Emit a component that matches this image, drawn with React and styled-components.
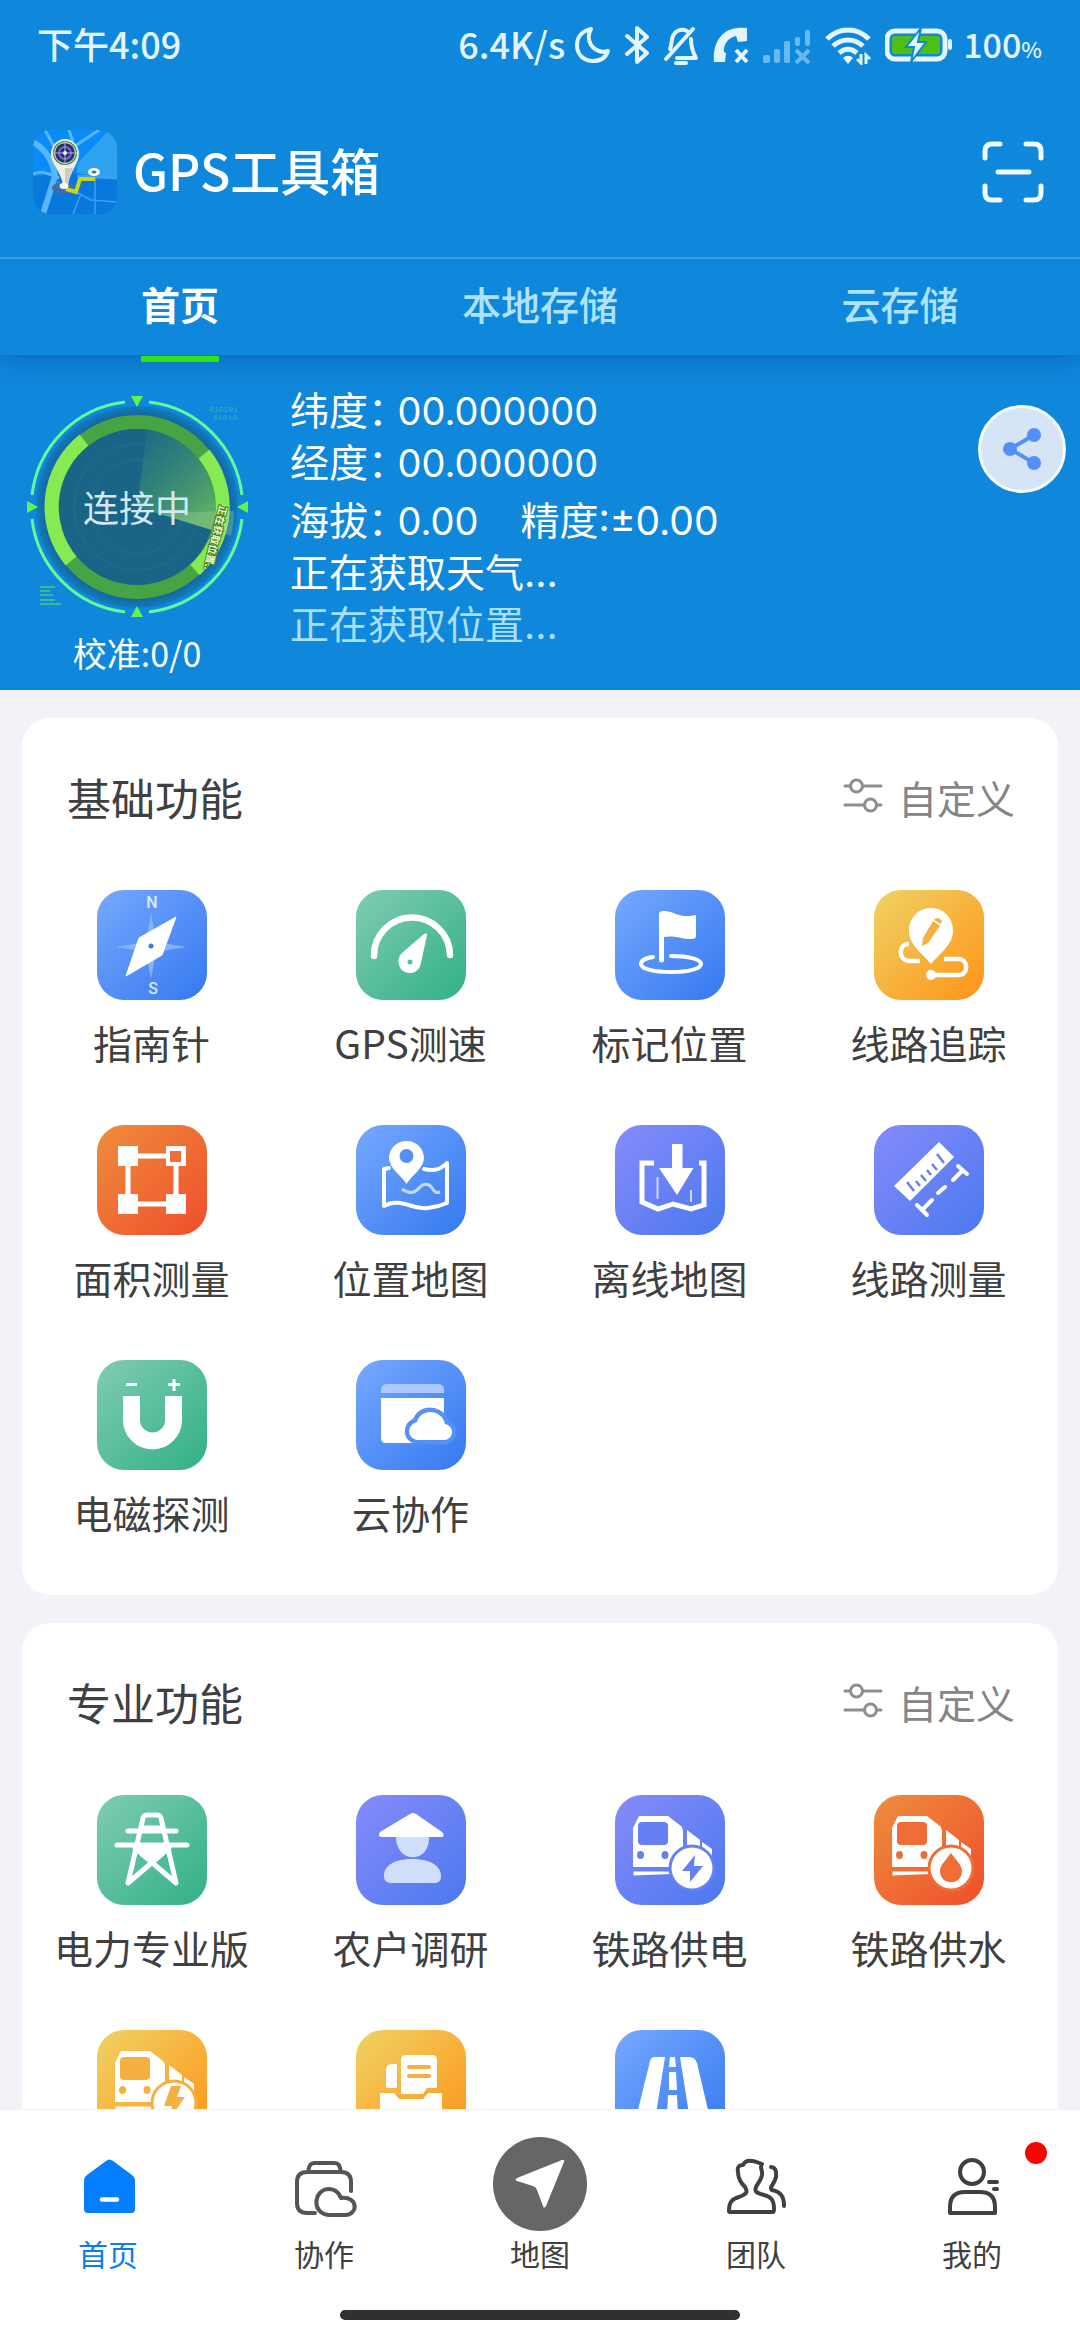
import React from "react";
import styled, { createGlobalStyle } from "styled-components";

const GlobalStyle = createGlobalStyle`
  * { box-sizing: border-box; }
  body {
    margin: 0;
    background: #f2f2f8;
    font-family: "Noto Sans CJK SC", "Noto Sans", sans-serif;
    color: #404040;
  }
  button {
    margin: 0;
    padding: 0;
    border: 0;
    background: none;
    color: inherit;
    font: inherit;
  }
  svg { display: block; }
`;

const Screen = styled.div`
  display: flex;
  flex-direction: column;
  height: 100vh;
`;

/* ---------- status bar ---------- */

const StatusBar = styled.div`
  display: flex;
  align-items: center;
  justify-content: space-between;
  height: 86px;
  padding: 0 38px 0 37px;
  background: #0f87db;
  color: #e2f5ff;
  font-size: 36px;
  font-weight: 500;
`;

const StatusGroup = styled.div`
  display: flex;
  align-items: center;
`;

const StatusIcons = styled.div`
  display: flex;
  align-items: center;
  gap: 14px;
  padding: 4px 10px 0 8px;
`;

const Percent = styled.span`
  font-size: 34px;
  small { font-size: 22px; }
`;

/* ---------- header ---------- */

const Header = styled.header`
  display: flex;
  align-items: center;
  height: 171px;
  padding: 0 36px 0 33px;
  background: #0f87db;
  color: #fff;
`;

const Title = styled.h1`
  flex: 1;
  margin: 0 0 0 16px;
  padding-bottom: 6px;
  font-size: 50px;
  font-weight: 500;
  line-height: 64px;
`;

const Tabs = styled.nav`
  position: relative;
  z-index: 1;
  display: grid;
  grid-template-columns: repeat(3, 1fr);
  height: 98px;
  border-top: 2px solid #3c9fe5;
  background: #0f87db;
  box-shadow: 0 4px 22px rgba(0, 60, 130, 0.4);
  clip-path: inset(0 0 -30px 0);
`;

const Tab = styled.button`
  position: relative;
  padding-bottom: 8px;
  color: ${(p) => (p.$active ? "#fff" : "#aee2ff")};
  font-size: 39px;
  font-weight: ${(p) => (p.$active ? 700 : 500)};

  &::after {
    content: "";
    display: ${(p) => (p.$active ? "block" : "none")};
    position: absolute;
    left: 50%;
    bottom: -7px;
    width: 78px;
    height: 6px;
    margin-left: -39px;
    background: #2fe314;
  }
`;

/* ---------- position panel ---------- */

const Panel = styled.section`
  display: flex;
  align-items: flex-start;
  padding: 40px 14px 15px 25px;
  background: #0f87db;
  color: #fff;
`;

const Gauge = styled.div`
  display: flex;
  flex-direction: column;
  align-items: center;
  gap: 12px;
`;

const GaugeDial = styled.div`
  display: grid;
  place-items: center;
  > * { grid-area: 1 / 1; }
`;

const DialText = styled.span`
  padding-bottom: 2px;
  color: #cfe8f2;
  font-size: 36px;
  line-height: 44px;
`;

const Calibration = styled.span`
  font-size: 34px;
  line-height: 44px;
`;

const Readings = styled.div`
  flex: 1;
  display: grid;
  row-gap: 6px;
  margin: -10px 0 0 41px;
  font-family: Inter, "Noto Sans CJK SC", sans-serif;
  font-size: 39px;
  line-height: 52px;
`;

const Reading = styled.div`
  display: flex;
  color: ${(p) => (p.$soft ? "#a9dfff" : "#fff")};
`;

const ReadingLabel = styled.span`
  font-feature-settings: "halt";
  margin-right: 10px;
`;

const ReadingValue = styled.span`
  margin-right: 42px;
  font-size: 38px;
`;

const ShareButton = styled.button`
  display: grid;
  place-items: center;
  width: 88px;
  height: 88px;
  margin-top: 10px;
  border: 3px solid #f4fcff;
  border-radius: 50%;
  background: #d5e5f5;
`;

/* ---------- function cards ---------- */

const Content = styled.main`
  flex: 1;
  min-height: 0;
  display: flex;
  flex-direction: column;
  gap: 28px;
  padding: 28px 22px;
  overflow-y: auto;
  scrollbar-width: none;
`;

const Card = styled.section`
  flex: none;
  padding-bottom: 55px;
  border-radius: 28px;
  background: #fff;
`;

const CardHead = styled.div`
  display: flex;
  align-items: center;
  justify-content: space-between;
  height: 172px;
  padding: 0 43px 14px 45px;
`;

const CardTitle = styled.h2`
  margin: 0;
  font-size: 44px;
  font-weight: 400;
`;

const CustomButton = styled.button`
  display: flex;
  align-items: center;
  gap: 15px;
  color: #858585;
  font-size: 39px;
`;

const Grid = styled.div`
  display: grid;
  grid-template-columns: repeat(4, 1fr);
  row-gap: 55px;
`;

const Item = styled.button`
  display: flex;
  flex-direction: column;
  align-items: center;
  gap: 15px;
  min-height: 180px;
  font-size: 39px;
  line-height: 54px;
  white-space: nowrap;
`;

const tones = {
  blue: ["#76a8ff", "#5590f8", "#3579f0"],
  green: ["#80ccb2", "#58bf9c", "#31b088"],
  orange: ["#ee8d3d", "#f06d35", "#f04e2b"],
  purple: ["#868bfa", "#667ff3", "#4b78ef"],
  yellow: ["#efd364", "#f4b040", "#ff9318"],
};

const Tile = styled.span`
  display: block;
  width: 110px;
  height: 110px;
  border-radius: 27px;
  background: linear-gradient(135deg, ${(p) => tones[p.$tone][0]}, ${(p) => tones[p.$tone][2]});
  color: ${(p) => tones[p.$tone][1]};
`;

/* ---------- bottom bar ---------- */

const BottomBar = styled.footer`
  background: #fff;
  border-top: 1px solid #f0f0f5;
  padding-bottom: 20px;
`;

const NavRow = styled.nav`
  display: grid;
  grid-template-columns: repeat(5, 1fr);
  padding: 27px 0 39px;
`;

const NavItem = styled.a`
  position: relative;
  display: flex;
  flex-direction: column;
  align-items: center;
  gap: 4px;
  color: ${(p) => (p.$active ? "#0a7df0" : "#404040")};
  font-size: 30px;
  line-height: 36px;
  text-decoration: none;
`;

const Badge = styled.i`
  position: absolute;
  top: 5px;
  right: 33px;
  width: 22px;
  height: 22px;
  border-radius: 50%;
  background: #f00;
`;

const HomeHandle = styled.div`
  width: 37%;
  height: 10px;
  margin: 0 auto;
  border-radius: 5px;
  background: #303030;
`;

/* ---------- drawings ---------- */

const StatusGlyphs = () => (
  <StatusIcons aria-hidden="true">
    <svg width="38" height="40" viewBox="0 0 38 40" fill="none" stroke="#e2f5ff" strokeWidth="4" strokeLinejoin="round">
      <path d="M18 4C9 6 4 12 4 20c0 10 7 16 16 16 8 0 13-4 15-10-3 1-6 1-9 0C17 23 13 13 18 4Z" />
    </svg>
    <svg width="24" height="40" viewBox="0 0 24 40" fill="none" stroke="#e2f5ff" strokeWidth="4" strokeLinejoin="round" strokeLinecap="round">
      <path d="M2 11l20 17-10 9V3l10 9L2 29" />
    </svg>
    <svg width="36" height="40" viewBox="0 0 36 40" fill="none" stroke="#e2f5ff" strokeWidth="4" strokeLinejoin="round" strokeLinecap="round">
      <path d="M30 4L3 34M7 24c2-4 1-9 3-13 2-5 8-8 14-5M28 14c0 8 1 12 5 19H14" />
      <path d="M13 38h10" />
    </svg>
    <svg width="36" height="40" viewBox="0 0 36 40">
      <path d="M1 37C0 27 2 18 8 11C14 4 23 2 34 3v13l-9 1-2-6c-9 2-13 10-12 16l2 1-1 9Z" fill="#e2f5ff" />
      <path d="M23 25l11 12M34 25L23 37" stroke="#e2f5ff" strokeWidth="4" />
    </svg>
    <svg width="48" height="40" viewBox="0 0 48 40" fill="#69b8ef">
      <rect x="0" y="30" width="7" height="8" rx="2" />
      <rect x="11" y="24" width="6" height="14" rx="2" />
      <rect x="21" y="16" width="6" height="22" rx="2" />
      <rect x="32" y="12" width="5" height="9" rx="2" />
      <rect x="42" y="5" width="5" height="16" rx="2" />
      <path d="M33 25l13 13M46 25L33 38" stroke="#69b8ef" strokeWidth="4" />
    </svg>
    <svg width="46" height="40" viewBox="0 0 46 40" fill="none" stroke="#e2f5ff" strokeWidth="5">
      <path d="M2 14C14 2 32 2 44 14M8 21c9-8 21-8 30 0M14 28c6-5 12-5 18 0" />
      <path d="M18 33c3-3 7-3 10 0l-5 6Z" fill="#e2f5ff" stroke="none" />
      <path d="M36 29v9l-4-4M41 39v-9l4 4" strokeWidth="3" />
    </svg>
    <svg width="68" height="40" viewBox="0 0 68 40">
      <rect x="2" y="6" width="58" height="28" rx="8" fill="none" stroke="#e2f5ff" strokeWidth="5" />
      <rect x="7" y="11" width="48" height="18" rx="3" fill="#4ebf16" />
      <rect x="63" y="14" width="4" height="11" rx="2" fill="#e2f5ff" />
      <path d="M36 3L21 22h8l-3 15 15-20h-8Z" fill="#e2f5ff" stroke="#0f87db" strokeWidth="2" />
    </svg>
  </StatusIcons>
);

const Logo = () => (
  <svg width="84" height="84" viewBox="0 0 84 84" aria-hidden="true">
    <defs>
      <clipPath id="logoClip"><rect width="84" height="84" rx="18" /></clipPath>
    </defs>
    <g clipPath="url(#logoClip)">
      <rect width="84" height="84" fill="#0a8cf8" />
      <path d="M76 0L44 34v14h40V0Z" fill="#2ea2ee" />
      <path d="M0 46l42-3 42 6v35H0Z" fill="#0878dc" />
      <path d="M0 12c12 7 20 18 22 34L10 84" fill="none" stroke="#59b6fb" strokeWidth="6" />
      <path d="M12 0l12 22M36 0l4 12M66 0L42 16M0 44c10-4 16 0 26 4" fill="none" stroke="#59b6fb" strokeWidth="3" />
      <path d="M24 52l34 18 26 2M48 64L40 84M62 46v38" fill="none" stroke="#3ba1f2" strokeWidth="1.5" />
      <path d="M44 46l40 2" stroke="#3ba1f2" strokeWidth="3" />
      <ellipse cx="31" cy="58" rx="12" ry="6" fill="#3d6ea8" />
      <path d="M33 59l10 3 4-13h15" fill="none" stroke="#c9d51d" strokeWidth="4" />
      <ellipse cx="61" cy="42" rx="6" ry="4" fill="#fff" />
      <ellipse cx="61" cy="42" rx="2.5" ry="1.5" fill="#357bb0" />
      <path d="M18 24c0-8 6-15 14-15s14 7 14 15c0 9-9 17-11 31h-5C28 41 18 34 18 24Z" fill="#f1eee0" />
      <path d="M32 38h8c-3 7-5 11-5 17h-3Z" fill="#cfccc1" />
      <ellipse cx="31" cy="56" rx="4.5" ry="3" fill="#fff" />
      <circle cx="32" cy="23" r="12" fill="#3d7a4a" />
      <circle cx="32" cy="23" r="10.5" fill="none" stroke="#dfe9d8" strokeWidth="1" />
      <circle cx="32" cy="23" r="9.5" fill="#2a2d6d" />
      <circle cx="32" cy="23" r="6" fill="none" stroke="#7468d4" strokeWidth="2" />
      <path d="M32 11v24M20 23h24" stroke="#a9b5df" strokeWidth="1" />
      <circle cx="32" cy="23" r="2" fill="#fff" />
    </g>
  </svg>
);

const ScanIcon = () => (
  <svg width="62" height="62" viewBox="0 0 62 62" fill="none" stroke="#eefaff" strokeWidth="5" strokeLinecap="round" aria-hidden="true">
    <path d="M3 17v-7q0-7 7-7h8M44 3h8q7 0 7 7v7M59 45v7q0 7-7 7H44M18 59H10q-7 0-7-7v-7M16 31h31" />
  </svg>
);

const Radar = () => (
  <svg width="224" height="224" viewBox="-112 -112 224 224" aria-hidden="true">
    <defs>
      <radialGradient id="halo">
        <stop offset="0.9" stopColor="#176596" />
        <stop offset="1" stopColor="#0f7cc4" />
      </radialGradient>
      <linearGradient id="sweep" x1="0.1" y1="0" x2="0.8" y2="0.9">
        <stop offset="0" stopColor="#2f8a72" stopOpacity="0.2" />
        <stop offset="1" stopColor="#5bab65" />
      </linearGradient>
    </defs>
    <circle r="101" fill="url(#halo)" />
    <circle r="79" fill="#1a6488" />
    <circle r="47" fill="none" stroke="#24708f" strokeWidth="1" />
    <circle r="63" fill="none" stroke="#24708f" strokeWidth="1" />
    <path d="M0 0L10 -78A79 79 0 0 1 75 23Z" fill="url(#sweep)" />
    <circle r="85" fill="none" stroke="#46a444" strokeWidth="14" />
    <g fill="none" stroke="#85ea54" strokeWidth="14">
      <path d="M-53 -67A85 85 0 0 0 -66 54" />
      <path d="M67 -53A85 85 0 0 1 58 63" />
    </g>
    <path d="M20 6L94 29A99 99 0 0 0 97 4Z" fill="#a8dfa0" opacity="0.3" />
    <text x="0" y="0" transform="translate(83 -2) rotate(104)" fontSize="10" fontWeight="700" fill="#f2ffc4" stroke="#3f7a2a" strokeWidth="2" paintOrder="stroke">正在获取位置..</text>
    <g fill="none" stroke="#66f79a" strokeWidth="3">
      <path d="M-12 -105A106 106 0 0 0 -105 -12M12 -105A106 106 0 0 1 105 -12M-12 105A106 106 0 0 1 -105 12M12 105A106 106 0 0 0 105 12" />
    </g>
    <g fill="#64f34c">
      <path d="M-6 -111H6L0 -100ZM-6 110H6L0 99ZM-110 -6V6L-99 0ZM111 -6V6L100 0Z" />
    </g>
    <path d="M-97 80h15M-97 84h10M-97 88h13M-97 93h15M-97 97h21" stroke="#4cc983" strokeWidth="1.5" />
    <g fill="#45bda6" fontSize="8" opacity="0.8" fontFamily="Liberation Mono">
      <text x="72" y="-95">010101</text>
      <text x="76" y="-87">01010</text>
    </g>
  </svg>
);

const ShareIcon = () => (
  <svg width="40" height="44" viewBox="0 0 40 44" fill="#548ff8" stroke="#548ff8" aria-hidden="true">
    <path d="M32 8L8 22l24 14" fill="none" strokeWidth="4" />
    <g stroke="none"><circle cx="32" cy="8" r="7" /><circle cx="8" cy="22" r="7" /><circle cx="32" cy="36" r="7" /></g>
  </svg>
);

const SlidersIcon = () => (
  <svg width="40" height="44" viewBox="0 0 40 44" fill="none" stroke="#8e8e8e" strokeWidth="3" strokeLinecap="round" aria-hidden="true">
    <path d="M2 11h5M20 11h18M2 30h19M34 30h4" />
    <circle cx="13.5" cy="11" r="6" />
    <circle cx="27.5" cy="30" r="6" />
  </svg>
);

const Train = ({ children }) => (
  <>
    <path d="M18 33L24 21H53L66 31q2 2 2 5V72H18Z" fill="#fff" />
    <rect x="23" y="27" width="30" height="23" rx="4" fill="currentColor" />
    <ellipse cx="25.5" cy="60" rx="3.5" ry="4" fill="currentColor" />
    <ellipse cx="50" cy="60" rx="3.5" ry="4" fill="currentColor" />
    <path d="M18.500 76.500H56V79L18.500 80.500Z" fill="#fff" />
    <path d="M72 35l13 10v8H72ZM87 47l10 7v8l-10-8Z" fill="#fff" />
    <circle cx="77" cy="73" r="23.500" fill="currentColor" />
    <circle cx="77" cy="73" r="20.500" fill="#fff" />
    {children}
  </>
);

const art = {
  compass: (
    <>
      <g fill="#fff" fillOpacity="0.8" fontSize="16" fontFamily="Roboto" fontWeight="500" textAnchor="middle">
        <text x="55" y="18">N</text>
        <text x="56" y="104">S</text>
      </g>
      <path d="M54 23l5 29 30 5-30 5-5 27-5-27-30-5 30-5Z" fill="#86b2fb" />
      <path d="M79 27L65 65 29 86 42 48Z" fill="#fff" stroke="#fff" strokeLinejoin="round" />
      <circle cx="54" cy="56" r="2.500" fill="#3b78e8" />
    </>
  ),
  speed: (
    <>
      <path d="M18 66A38 38 0 1 1 94 65" fill="none" stroke="#fff" strokeWidth="6.500" strokeLinecap="round" />
      <path d="M68 44q3-2 3 1l-6 28c-2 11-14 13-20 6-4-6-3-12 1-16Z" fill="#fff" />
      <circle cx="54" cy="72" r="2.500" fill="currentColor" />
    </>
  ),
  flag: (
    <>
      <path d="M44 23q1-2 4-2c10-1 15 8 33 4v21q0 3-4 3c-12 0-17-4-28-2v24q-2 3-5 0Z" fill="#fff" />
      <path d="M38 67C30 68 26 71 26 74c0 5 13 8 30 8s30-3 30-8-13-8-30-8" fill="none" stroke="#fff" strokeWidth="4" strokeLinecap="round" />
    </>
  ),
  route: (
    <>
      <path d="M57 18c-13 0-22 10-22 23 0 14 14 23 22 33 8-10 22-19 22-33 0-13-9-23-22-23Z" fill="#fff" />
      <path d="M59 31l7 5-12 17-6 3 1-8ZM61 29q3-3 7 2l-1 3-7-4Z" fill="currentColor" />
      <path d="M35 54c-11 0-11 16 0 17h11M70 69h14c11 0 11 16 0 16H57" fill="none" stroke="#fff" strokeWidth="4.500" />
      <circle cx="57" cy="85" r="5" fill="#fff" />
    </>
  ),
  area: (
    <>
      <path d="M31 31H79V79H31Z" fill="none" stroke="#fff" strokeWidth="5" />
      <path d="M21 21h20v20H21ZM69 21h20v20H69ZM21 69h20v20H21ZM69 69h20v20H69Z" fill="#fff" />
      <path d="M73 26h11v11H73Z" fill="currentColor" />
    </>
  ),
  place: (
    <>
      <path d="M33 43l-5 1V81c16-9 29 4 44 2q10-1 19-5V38C85 43 81 47 68 44" fill="none" stroke="#fff" strokeWidth="4" strokeLinecap="round" strokeLinejoin="round" />
      <path d="M46 64c7 5 13 4 17-1s10-5 13 0 5 5 8 4" fill="none" stroke="#c3dafe" strokeWidth="3" />
      <path d="M50.500 16C40 16 33 24 33 33c0 10 12 17 17.500 26C56 50 68 43 68 33c0-9-7-17-17.500-17Z" fill="#fff" />
      <circle cx="50.500" cy="31" r="7" fill="currentColor" />
    </>
  ),
  offline: (
    <>
      <path d="M39 38H27V77l16 7 15-5 18 5 13-4V38h-5" fill="none" stroke="#fff" strokeWidth="5" />
      <path d="M42.500 52v22M76 65v12" stroke="#cfd5fc" strokeWidth="2" />
      <path d="M57 19H67.500V43H78.500L62 70 44 43H57Z" fill="#fff" />
    </>
  ),
  ruler: (
    <>
      <path d="M65 17L80 32 36 76 20 61Z" fill="#fff" />
      <path d="M33 57l7 9M42 56l4 5M47 50l5 6M53 45l4 5M58 39l5 6M63 29l7 9" stroke="currentColor" strokeWidth="2.500" />
      <path d="M84 41l9 8M88 46l-9 9M71 62l-7 6M58 75L48 85M43 80l10 10" stroke="#fff" strokeWidth="4" strokeLinecap="round" />
    </>
  ),
  magnet: (
    <>
      <path d="M34.500 36V60a21 21 0 0 0 42 0V36" fill="none" stroke="#fff" strokeWidth="17" />
      <path d="M29 24.500H40M71 24.500H83M77 19v12" stroke="#fff" strokeWidth="3" />
    </>
  ),
  cloud: (
    <>
      <path d="M25 33v-3q0-6 6-6H82q6 0 6 6v3Z" fill="#acc9fe" />
      <path d="M25 38H88V60L60 83H30q-5 0-5-5Z" fill="#fff" />
      <path d="M62 80c-11-1-12-15-1-18 3-13 24-14 28 2 10 2 9 15 0 16Z" fill="#fff" stroke="currentColor" strokeWidth="9" />
      <path d="M62 80c-11-1-12-15-1-18 3-13 24-14 28 2 10 2 9 15 0 16Z" fill="#fff" />
    </>
  ),
  pylon: (
    <g fill="none" stroke="#fff" strokeWidth="5" strokeLinecap="round" strokeLinejoin="round">
      <path d="M31 88L46 23q1-3 4-3h10q3 0 4 3L79 88 38 53M31 88L72 53M31 36H79M20 50H90" />
      <path d="M39 52H71L55 66ZM46 33H64" fill="#fff" />
    </g>
  ),
  farmer: (
    <>
      <path d="M40 42H73c1 27-33 27-33 0ZM36 88c-5 0-8-2-8-7 0-11 11-17 28-17s29 6 29 17c0 5-2 7-7 7Z" fill="#cfdffb" />
      <path d="M54 19q3-2 6 0L86 37q4 5-1 5H26q-5 0-2-5Z" fill="#fff" />
    </>
  ),
  trainPower: <Train><path d="M80 60L67 76h8v11L88 71H79Z" fill="currentColor" /></Train>,
  trainWater: <Train><path d="M77 58c5 7 11 12 11 18 0 15-22 15-22 0 0-6 6-11 11-18Z" fill="currentColor" /></Train>,
  trainBolt: <Train><path d="M74 56H84L80 67H88L72 90 75 76H67Z" fill="currentColor" /></Train>,
  archive: (
    <>
      <path d="M30 40q0-6 6-6h5V58H30Z" fill="#fff" />
      <path d="M45 30q0-5 5-5H76q5 0 5 5V58H71l-4 6H45Z" fill="#fff" />
      <path d="M53 37H73M53 46H73" stroke="currentColor" strokeWidth="4" strokeLinecap="round" />
      <path d="M24 63H38l5 6H67l5-6H86V88H24Z" fill="#fff" />
    </>
  ),
  road: (
    <path d="M40 27H50L41 84H22L35 31q1-4 5-4ZM65 27H74q6 0 8 6L94 84H74ZM55 27h5l1 10H54ZM54 42h7l1 18H54ZM53 65h9l1 20H52Z" fill="#fff" />
  ),
};

const navArt = {
  home: (
    <>
      <path d="M45 24q3-3 7 0L71 38q3 2 3 5V72q0 4-4 4H27q-4 0-4-4V43q0-3 3-5Z" fill="#057dff" />
      <path d="M41 62.500H56" stroke="#fff" strokeWidth="4.500" strokeLinecap="round" />
    </>
  ),
  team: (
    <g fill="none" stroke="#404040" strokeWidth="4" strokeLinecap="round" strokeLinejoin="round">
      <path d="M20 74c0-9 3-12 10-14 8-3 9-5 6-10-5-5-7-9-7-15-1-5 1-7 5-7 3-6 9-5 19-1-3 3 1 6 0 11-1 6-5 9-6 12-2 5 1 6 8 8 8 2 10 6 10 14 0 2 0 3-1 3H21q-1 0-1-1Z" />
      <path d="M62 30c6 0 6 9 4 13-2 5-6 8-3 10 10 2 12 8 12 16" />
    </g>
  ),
  coop: (
    <g fill="none" stroke="#555" strokeWidth="4" strokeLinecap="round" strokeLinejoin="round">
      <path d="M74 54V45q0-10-10-10H30q-10 0-10 10V66q0 10 10 10h8M31 35c1-6 2-9 7-9H57c5 0 6 3 7 9" />
      <path d="M53 78c-19 0-17-26-1-26 6 0 10 4 12 9 18-2 17 17 4 17Z" />
    </g>
  ),
  mine: (
    <g fill="none" stroke="#404040" strokeWidth="4" strokeLinejoin="round">
      <circle cx="47" cy="35" r="12" />
      <path d="M25 76V70q0-15 15-15H55q15 0 15 15v6Z" />
      <path d="M64 45h8M69 52h3" strokeLinecap="round" />
    </g>
  ),
  map: (
    <>
      <circle cx="47" cy="47" r="47" fill="#666" />
      <path d="M69 23q3-1 2 2L53 69q-2 3-3 0l-6-16q-1-3-4-4L24 44q-3-1 0-3Z" fill="#fff" />
    </>
  ),
};

/* ---------- data ---------- */

const basic = [
  ["指南针", "blue", "compass"],
  ["GPS测速", "green", "speed"],
  ["标记位置", "blue", "flag"],
  ["线路追踪", "yellow", "route"],
  ["面积测量", "orange", "area"],
  ["位置地图", "blue", "place"],
  ["离线地图", "purple", "offline"],
  ["线路测量", "purple", "ruler"],
  ["电磁探测", "green", "magnet"],
  ["云协作", "blue", "cloud"],
];

const professional = [
  ["电力专业版", "green", "pylon"],
  ["农户调研", "purple", "farmer"],
  ["铁路供电", "purple", "trainPower"],
  ["铁路供水", "orange", "trainWater"],
  ["", "yellow", "trainBolt", "铁路"],
  ["", "yellow", "archive", "档案"],
  ["", "blue", "road", "公路"],
];

const navItems = [
  ["首页", "home"],
  ["协作", "coop"],
  ["地图", "map"],
  ["团队", "team"],
  ["我的", "mine"],
];

const FunctionCard = ({ title, items }) => (
  <Card>
    <CardHead>
      <CardTitle>{title}</CardTitle>
      <CustomButton type="button"><SlidersIcon />自定义</CustomButton>
    </CardHead>
    <Grid>
      {items.map(([label, tone, icon, name]) => (
        <Item type="button" key={icon} aria-label={name}>
          <Tile $tone={tone}>
            <svg width="110" height="110" viewBox="0 0 110 110" aria-hidden="true">{art[icon]}</svg>
          </Tile>
          {label && <span>{label}</span>}
        </Item>
      ))}
    </Grid>
  </Card>
);

export default function App() {
  return (
    <Screen>
      <GlobalStyle />
      <StatusBar>
        <span>下午4:09</span>
        <StatusGroup>
          <span>6.4K/s</span>
          <StatusGlyphs />
          <Percent>100<small>%</small></Percent>
        </StatusGroup>
      </StatusBar>
      <Header>
        <Logo />
        <Title>GPS工具箱</Title>
        <button type="button" aria-label="扫一扫"><ScanIcon /></button>
      </Header>
      <Tabs>
        <Tab type="button" $active>首页</Tab>
        <Tab type="button">本地存储</Tab>
        <Tab type="button">云存储</Tab>
      </Tabs>
      <Panel>
        <Gauge>
          <GaugeDial>
            <Radar />
            <DialText>连接中</DialText>
          </GaugeDial>
          <Calibration>校准:0/0</Calibration>
        </Gauge>
        <Readings>
          <div>
            <Reading><ReadingLabel>纬度：</ReadingLabel><ReadingValue>00.000000</ReadingValue></Reading>
            <Reading><ReadingLabel>经度：</ReadingLabel><ReadingValue>00.000000</ReadingValue></Reading>
          </div>
          <div>
            <Reading>
              <ReadingLabel>海拔：</ReadingLabel><ReadingValue>0.00</ReadingValue>
              <span>精度:±0.00</span>
            </Reading>
            <Reading>正在获取天气...</Reading>
            <Reading $soft>正在获取位置...</Reading>
          </div>
        </Readings>
        <ShareButton type="button" aria-label="分享"><ShareIcon /></ShareButton>
      </Panel>
      <Content>
        <FunctionCard title="基础功能" items={basic} />
        <FunctionCard title="专业功能" items={professional} />
      </Content>
      <BottomBar>
        <NavRow>
          {navItems.map(([label, icon]) => (
            <NavItem href={`#${icon}`} key={icon} $active={icon === "home"}>
              <svg width="94" height="94" viewBox="0 0 94 94" aria-hidden="true">{navArt[icon]}</svg>
              {label}
              {icon === "mine" && <Badge />}
            </NavItem>
          ))}
        </NavRow>
        <HomeHandle />
      </BottomBar>
    </Screen>
  );
}
